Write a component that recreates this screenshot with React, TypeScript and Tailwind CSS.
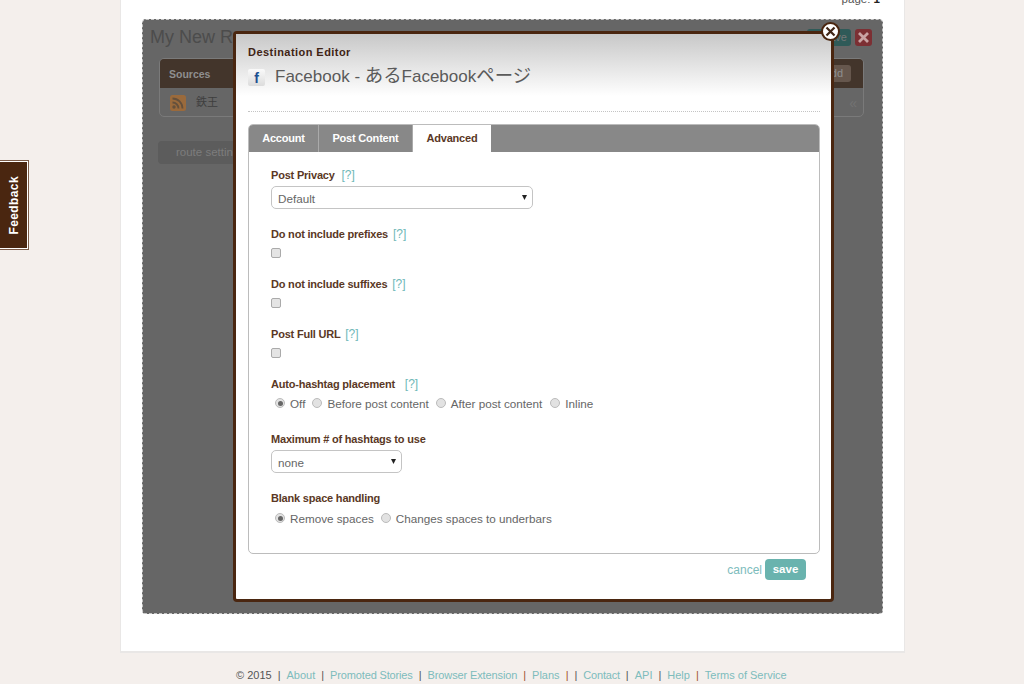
import React from "react";

const Help = ({ ml = "ml-1" }: { ml?: string }) => (
  <span className={`${ml} text-[12px] tracking-normal font-normal text-[#6fb8b8]`}>[?]</span>
);

const Label = ({ children }: { children: React.ReactNode }) => (
  <div className="h-[16px] text-[11px] leading-[16px] font-bold text-[#5a3825] tracking-[-0.2px] whitespace-nowrap">{children}</div>
);

const Check = () => (
  <div className="mt-[6px] w-[10px] h-[10px] rounded-[2px] border border-[#aaa] bg-[#e4e4e4]" />
);

const Radio = ({ on, label, cls }: { on?: boolean; label: string; cls: string }) => (
  <div className={`flex items-center ${cls}`}>
    <span className="-mt-[2px] w-[10px] h-[10px] rounded-full border border-[#bbb] bg-[#e2e2e2] flex items-center justify-center">
      {on && <span className="w-[5px] h-[5px] rounded-full bg-[#666]" />}
    </span>
    <span className="ml-[5px] text-[11.7px] leading-[14px] text-[#666] whitespace-nowrap">{label}</span>
  </div>
);

const Select = ({ w, label }: { w: string; label: string }) => (
  <div className={`${w} h-[23px] mt-[3px] pl-[6px] pr-[5px] flex items-center justify-between rounded-[5px] border border-[#c4c4c4] bg-white text-[11.7px] text-[#666]`}>
    <span className="translate-y-px">{label}</span>
    <svg width="5" height="5" viewBox="0 0 5 5"><path d="M0 0h5L2.5 5z" fill="#222" /></svg>
  </div>
);

const Sep = ({ d = false, m = "mx-[6px]" }: { d?: boolean; m?: string }) => (
  <span className={`${m} ${d ? "text-[#a0522d]" : "text-[#555]"}`}>|</span>
);

const A = ({ children, cls = "" }: { children: React.ReactNode; cls?: string }) => <span className={`text-[#7dbcbc] ${cls}`}>{children}</span>;

export default function App() {
  return (
    <div className="relative h-[684px] overflow-hidden bg-[#f4efec] font-['Liberation_Sans','Noto_Sans_CJK_JP',sans-serif]">
      {/* Feedback tab */}
      <div className="absolute left-0 top-[160px] w-[29px] h-[90px] border border-l-0 border-[#7a5a48] bg-white pr-px py-px">
        <div className="h-full w-full bg-[#4a2610] flex items-center justify-center">
          <span className="[writing-mode:vertical-rl] rotate-180 text-[12px] font-bold text-white tracking-[0.4px]">Feedback</span>
        </div>
      </div>

      {/* White page panel */}
      <div className="ml-[120px] w-[785px] h-[653px] bg-white border-x border-b-2 border-[#e9e7e6] relative">
        <div className="h-[19px] overflow-hidden pr-[24px] text-right">
          <div className="-translate-y-[8px] text-[11.5px] leading-[14px] text-[#555]">
            page: <span className="font-bold text-[#222]">1</span>
          </div>
        </div>

        {/* Dimmed route block */}
        <div className="ml-[21px] w-[741px] h-[595px] rounded-[4px] border border-dashed border-[#c4c4c4] bg-[#666] px-[16px] overflow-hidden">
          <div className="flex justify-between h-[38px]">
            <div className="-ml-[9px] mt-[6px] text-[18px] leading-[22px] text-[#4c4c4c]">My New Route</div>
            <div className="flex mt-[9px] gap-[4px] -mr-[6px]">
              <div className="w-[44px] h-[17px] rounded-[3px] bg-[#2f5a58] text-[11px] text-[#777] text-right pr-1">save</div>
              <div className="w-[17px] h-[17px] rounded-[3px] bg-[#7c2f33] flex items-center justify-center">
                <svg width="13" height="13" viewBox="0 0 13 13"><path d="M2 2l9 9M11 2l-9 9" stroke="#c9a4a4" strokeWidth="2.8" /></svg>
              </div>
            </div>
          </div>
          <div className="w-[705px] h-[59px] rounded-[5px] border border-[#7a7a7a] overflow-hidden">
            <div className="h-[29px] bg-[#43352b] flex items-center justify-between pl-[9px] pr-[12px]">
              <span className="mt-[2px] text-[10.5px] font-bold text-[#8f8f8f]">Sources</span>
              <span className="h-[17px] px-[8px] rounded-[3px] bg-[#66574d] text-[11px] leading-[17px] text-[#8f8f8f]">add</span>
            </div>
            <div className="h-[29px] flex items-center pl-[10px] pr-[6px]">
              <svg width="16" height="16" viewBox="0 0 16 16">
                <rect width="16" height="16" rx="2.5" fill="#9a6a3c" />
                <circle cx="4" cy="12" r="1.7" fill="#64503c" />
                <path d="M2.5 7.5a6 6 0 016 6M2.5 3.5a10 10 0 0110 10" fill="none" stroke="#64503c" strokeWidth="1.8" />
              </svg>
              <span className="ml-[10px] text-[11px] text-[#3e3e3e]">鉄王</span>
              <span className="ml-auto text-[14px] leading-[14px] text-[#737373]">«</span>
            </div>
          </div>
          <div className="mt-[24px] -ml-px w-[120px] h-[23px] rounded-[4px] bg-[#5c5c5c] pl-[18px] text-[11.5px] leading-[23px] text-[#7c7c7c]">route settings</div>
        </div>

        {/* Footer */}
        <div className="absolute top-[665px] left-[115px] text-[11px] leading-[20px] text-[#555] whitespace-nowrap">
          © 2015<Sep /><A>About</A><Sep /><A cls="tracking-[-0.15px]">Promoted Stories</A><Sep /><A cls="tracking-[-0.12px]">Browser Extension</A><Sep d /><A>Plans</A><Sep d /><Sep m="mr-[6px]" /><A cls="tracking-[-0.2px]">Contact</A><Sep /><A>API</A><Sep /><A>Help</A><Sep d /><A>Terms of Service</A>
        </div>
      </div>

      {/* Modal */}
      <div className="absolute left-[233px] top-[31px] w-[601px] h-[571px] rounded-[4px] border-[3px] border-[#4a2610] bg-white pl-[12px] pr-[11px]">
        <div className="absolute left-0 top-0 right-0 h-[62px] bg-gradient-to-b from-[#c8c8c8] to-white" />
        <div className="relative">
          <div className="pt-[11px] h-[31px] text-[11px] leading-[14px] font-bold text-[#3f2415] tracking-[0.45px]">Destination Editor</div>
          <div className="flex items-center h-[24px]">
            <div className="w-[17px] h-[17px] rounded-[2px] bg-gradient-to-b from-[#fafafa] to-[#dcdcdc] flex items-end justify-center overflow-hidden">
              <span className="text-[14px] leading-[15px] font-bold text-[#1d4f91]">f</span>
            </div>
            <div className="ml-[10px] -mt-[2px] text-[17px] leading-[24px] text-[#5a5a5a] whitespace-nowrap">
              Facebook - <span className="text-[18.4px]">ある</span>Facebook<span className="text-[18.4px]">ページ</span>
            </div>
          </div>
          <div className="mt-[22px] border-t border-dotted border-[#c4c4c4]" />

          {/* Tabs card */}
          <div className="mt-[12px] w-[572px] h-[430px] rounded-[5px] border border-[#bcbcbc] overflow-hidden">
            <div className="h-[27px] bg-[#888] flex text-[11px] font-bold text-white tracking-[-0.2px]">
              <div className="w-[70px] border-r border-[#aaa] flex items-center justify-center">Account</div>
              <div className="w-[94px] border-r border-[#aaa] flex items-center justify-center">Post Content</div>
              <div className="w-[78px] bg-white text-[#5a3825] flex items-center justify-center">Advanced</div>
            </div>
            <div className="pl-[22px] pt-[15px]">
              <Label>Post Privacy <Help ml="ml-[4px]" /></Label>
              <Select w="w-[262px]" label="Default" />
              <div className="mt-[17px]"><Label>Do not include prefixes <Help ml="ml-[2px]" /></Label><Check /></div>
              <div className="mt-[18px]"><Label>Do not include suffixes <Help ml="ml-[2px]" /></Label><Check /></div>
              <div className="mt-[18px]"><Label>Post Full URL <Help ml="ml-[2px]" /></Label><Check /></div>
              <div className="mt-[18px]">
                <Label>Auto-hashtag placement <Help ml="ml-[7px]" /></Label>
                <div className="flex mt-[5px] h-[14px]">
                  <Radio on label="Off" cls="ml-[4px]" />
                  <Radio label="Before post content" cls="ml-[7px]" />
                  <Radio label="After post content" cls="ml-[7px]" />
                  <Radio label="Inline" cls="ml-[8px]" />
                </div>
              </div>
              <div className="mt-[20px]">
                <Label>Maximum # of hashtags to use</Label>
                <Select w="w-[131px]" label="none" />
              </div>
              <div className="mt-[17px]">
                <Label>Blank space handling</Label>
                <div className="flex mt-[6px] h-[14px]">
                  <Radio on label="Remove spaces" cls="ml-[4px]" />
                  <Radio label="Changes spaces to underbars" cls="ml-[7px]" />
                </div>
              </div>
            </div>
          </div>

          {/* Actions */}
          <div className="mt-[5px] flex justify-end items-center pr-[14px]">
            <span className="text-[12px] text-[#7dbcbc] mr-[3px]">cancel</span>
            <span className="w-[41px] h-[21px] rounded-[4px] bg-[#69b3ae] text-center text-[11.5px] leading-[21px] font-bold text-white">save</span>
          </div>
        </div>

        {/* Close button */}
        <div className="absolute -top-[12px] -right-[9px] w-[19px] h-[19px] rounded-full border-[2px] border-[#4a2610] bg-white flex items-center justify-center">
          <svg width="11" height="11" viewBox="0 0 11 11"><path d="M1.5 1.5l8 8M9.5 1.5l-8 8" stroke="#3f2415" strokeWidth="2.2" /></svg>
        </div>
      </div>
    </div>
  );
}
